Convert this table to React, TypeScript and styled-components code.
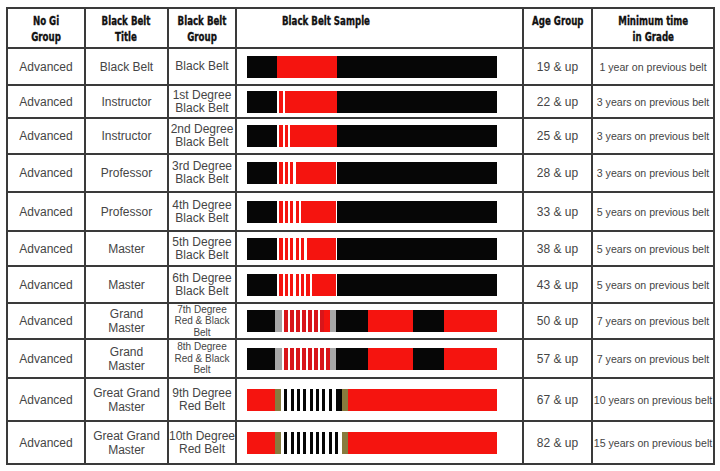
import React from 'react';
import styled, { createGlobalStyle } from 'styled-components';

const GlobalStyle = createGlobalStyle`
  html, body {
    margin: 0;
    background: #fff;
  }
  body {
    font-family: 'Liberation Sans', Arial, sans-serif;
  }
`;

const K = '#060606';
const R = '#f5140f';
const DR = '#d8151a';
const G = '#a6a6a6';
const O = '#877b3e';
const W = '#ffffff';

// stripe helpers - each repeat is one stripe
const degreeStripes = `repeating-linear-gradient(90deg, ${W} 0 2px, ${R} 2px 5.5px)`;
const redStripes = `repeating-linear-gradient(90deg, ${W} 0 1.7px, ${DR} 1.7px 6px)`;
const bwStripes = `repeating-linear-gradient(90deg, ${W} 0 3.4px, ${K} 3.4px 6.33px)`;

type Seg = [number, string];

const blackBelt = (degree: number): Seg[] => {
  if (degree === 0) return [[30, K], [60, R], [160, K]];
  const striped = Math.round(degree * 5.5);
  const tail = degree >= 3 ? 1 : 0;
  const segs: Seg[] = [[30, K], [striped, degreeStripes], [2, W], [58 - striped - tail, R]];
  if (tail) segs.push([1, W]);
  segs.push([160, K]);
  return segs;
};

const redBlackBelt = (degree: number): Seg[] => [
  [28, K],
  [7, G],
  [degree * 6, redStripes],
  ...(degree === 7 ? ([[6, R]] as Seg[]) : []),
  [6, G],
  [32, K],
  [45, R],
  [31, K],
  [53, R],
];

const redBelt9: Seg[] = [[28, R], [6, O], [51, bwStripes], [4, W], [6, K], [6, O], [149, R]];
const redBelt10: Seg[] = [[28, R], [6, O], [57, bwStripes], [4, W], [6, O], [149, R]];

type Row = {
  title: string;
  group: string;
  small?: boolean;
  belt: Seg[];
  age: string;
  time: string;
  h: number;
};

const rows: Row[] = [
  { title: 'Black Belt', group: 'Black Belt', belt: blackBelt(0), age: '19 & up', time: '1 year on previous belt', h: 35 },
  { title: 'Instructor', group: '1st Degree\nBlack Belt', belt: blackBelt(1), age: '22 & up', time: '3 years on previous belt', h: 31 },
  { title: 'Instructor', group: '2nd Degree\nBlack Belt', belt: blackBelt(2), age: '25 & up', time: '3 years on previous belt', h: 34 },
  { title: 'Professor', group: '3rd Degree\nBlack Belt', belt: blackBelt(3), age: '28 & up', time: '3 years on previous belt', h: 36 },
  { title: 'Professor', group: '4th Degree\nBlack Belt', belt: blackBelt(4), age: '33 & up', time: '5 years on previous belt', h: 37 },
  { title: 'Master', group: '5th Degree\nBlack Belt', belt: blackBelt(5), age: '38 & up', time: '5 years on previous belt', h: 33 },
  { title: 'Master', group: '6th Degree\nBlack Belt', belt: blackBelt(6), age: '43 & up', time: '5 years on previous belt', h: 35 },
  { title: 'Grand\nMaster', group: '7th Degree\nRed & Black\nBelt', small: true, belt: redBlackBelt(7), age: '50 & up', time: '7 years on previous belt', h: 34 },
  { title: 'Grand\nMaster', group: '8th Degree\nRed & Black\nBelt', small: true, belt: redBlackBelt(8), age: '57 & up', time: '7 years on previous belt', h: 37 },
  { title: 'Great Grand\nMaster', group: '9th Degree\nRed Belt', belt: redBelt9, age: '67 & up', time: '10 years on previous belt', h: 41 },
  { title: 'Great Grand\nMaster', group: '10th Degree\nRed Belt', belt: redBelt10, age: '82 & up', time: '15 years on previous belt', h: 41 },
];

const Page = styled.div`
  width: 720px;
  height: 471px;
  padding: 7px 0 0 6px;
  box-sizing: border-box;
  background: #fff;
`;

const Table = styled.div<{ $rows: string }>`
  display: grid;
  width: 709px;
  box-sizing: border-box;
  grid-template-columns: 76px 81px 66px 285px 67px 120px;
  grid-template-rows: ${({ $rows }) => $rows};
  gap: 2px;
  padding: 2px;
  background: #3a3a3a;
`;

const HeadCell = styled.div<{ $indent?: number }>`
  background: #fff;
  display: flex;
  align-items: flex-start;
  justify-content: ${({ $indent }) => ($indent ? 'flex-start' : 'center')};
  padding: 4px 0 0 ${({ $indent }) => $indent || 0}px;
  min-width: 0;
`;

const HeadText = styled.span<{ $left?: boolean }>`
  display: inline-block;
  flex: none;
  transform: scaleX(0.74);
  transform-origin: ${({ $left }) => ($left ? 'left' : 'center')};
  font-family: 'DejaVu Sans Condensed', 'Liberation Sans Narrow', sans-serif;
  font-weight: 700;
  font-size: 13px;
  line-height: 15.5px;
  color: #111;
  -webkit-text-stroke: 0.35px #111;
  text-align: center;
  white-space: pre;
`;

const Cell = styled.div<{ $size?: number; $lh?: number }>`
  background: #fff;
  display: flex;
  align-items: center;
  justify-content: center;
  text-align: center;
  white-space: pre;
  font-size: ${({ $size }) => $size || 12}px;
  line-height: ${({ $lh }) => $lh || 14}px;
  color: #454545;
`;

const BeltCell = styled.div`
  background: #fff;
  display: flex;
  align-items: center;
  padding-left: 10px;
`;

const Belt = styled.div`
  display: flex;
  width: 250px;
  height: 22px;
`;

const Seg = styled.div<{ $w: number; $bg: string }>`
  flex: 0 0 ${({ $w }) => $w}px;
  background: ${({ $bg }) => $bg};
`;

const heads: { text: string; indent?: number }[] = [
  { text: 'No Gi\nGroup' },
  { text: 'Black Belt\nTitle' },
  { text: 'Black Belt\nGroup' },
  { text: 'Black Belt Sample', indent: 45 },
  { text: 'Age Group' },
  { text: 'Minimum time\nin Grade' },
];

const App = (): React.ReactElement => (
  <>
    <GlobalStyle />
    <Page>
      <Table $rows={['38px', ...rows.map((r) => `${r.h}px`)].join(' ')}>
        {heads.map((h) => (
          <HeadCell key={h.text} $indent={h.indent}>
            <HeadText $left={!!h.indent}>{h.text}</HeadText>
          </HeadCell>
        ))}
        {rows.map((r, i) => (
          <React.Fragment key={i}>
            <Cell>Advanced</Cell>
            <Cell>{r.title}</Cell>
            <Cell $size={r.small ? 10 : 12} $lh={r.small ? 11.5 : 13}>
              {r.group}
            </Cell>
            <BeltCell>
              <Belt>
                {r.belt.map(([w, bg], j) => (
                  <Seg key={j} $w={w} $bg={bg} />
                ))}
              </Belt>
            </BeltCell>
            <Cell>{r.age}</Cell>
            <Cell $size={10.6}>{r.time}</Cell>
          </React.Fragment>
        ))}
      </Table>
    </Page>
  </>
);

export default App;
